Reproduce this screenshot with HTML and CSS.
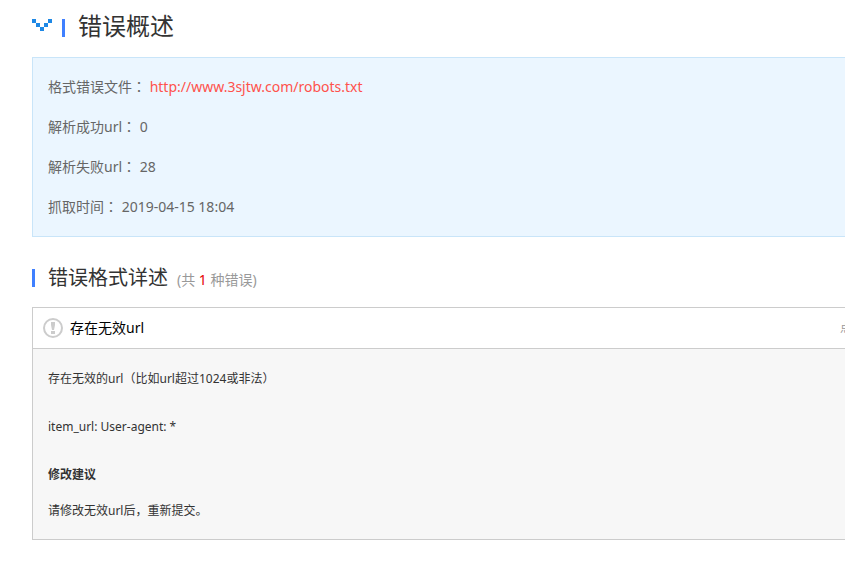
FILE: index.html
```html
<!DOCTYPE html>
<html lang="zh-CN">
<head>
<meta charset="utf-8">
<title>错误概述</title>
<link rel="stylesheet" href="styles.css">
</head>
<body>
<main class="page">
  <header class="page-head">
    <svg class="arrow" width="20" height="12" viewBox="0 0 20 12" shape-rendering="crispEdges" aria-hidden="true">
      <path fill="#1e88e5" d="M0 0h4v4H0zM4 4h4v4H4zM8 8h4v4H8zM12 4h4v4h-4zM16 0h4v4h-4z"/>
    </svg>
    <span class="bar"></span>
    <h1 class="page-title">错误概述</h1>
  </header>

  <dl class="summary">
    <div class="row"><dt>格式错误文件<span class="punct" lang="ja">：</span></dt> <dd><a class="file-link" href="#">http://www.3sjtw.com/robots.txt</a></dd></div>
    <div class="row"><dt>解析成功url<span class="punct" lang="ja">：</span></dt> <dd>0</dd></div>
    <div class="row"><dt>解析失败url<span class="punct" lang="ja">：</span></dt> <dd>28</dd></div>
    <div class="row"><dt>抓取时间<span class="punct" lang="ja">：</span></dt> <dd>2019-04-15 18:04</dd></div>
  </dl>

  <div class="section-head">
    <span class="bar"></span>
    <h2 class="section-title">错误格式详述</h2>
    <span class="count">(共 <em class="num">1</em> 种错误)</span>
  </div>

  <section class="card">
    <header class="card-head">
      <svg class="warn" width="20" height="20" viewBox="0 0 20 20" aria-hidden="true">
        <circle cx="10" cy="10" r="9" fill="none" stroke="#ccc" stroke-width="2"/>
        <path fill="#ccc" d="M8 4h4v3l-1 5H9L8 7zM8 13h4v3H8z"/>
      </svg>
      <h3 class="card-title">存在无效url</h3>
      <span class="more">点</span>
    </header>
    <div class="card-body">
      <p class="text">存在无效的url（比如url超过1024或非法）</p>
      <p class="text">item_url: User-agent: *</p>
      <h4 class="advice-title">修改建议</h4>
      <p class="advice">请修改无效url后，重新提交。</p>
    </div>
  </section>
</main>
</body>
</html>
```
FILE: styles.css
```css
* {
  box-sizing: border-box;
  margin: 0;
  padding: 0;
}

body {
  background: #fff;
  color: #333;
  font: 14px/20px "Noto Sans", "Noto Sans CJK SC", sans-serif;
  overflow-x: hidden;
}

h1, h2, h3, h4 {
  font-weight: 400;
}

.page {
  padding: 8px 0 32px 32px;
}

.page-head,
.section-head {
  display: flex;
  align-items: center;
}

.page-head {
  height: 40px;
}

.arrow {
  margin: 0 10px 6px 0;
}

.bar {
  width: 3px;
  height: 18px;
  margin-right: 13px;
  background: #3f80ff;
}

.page-title {
  padding-bottom: 4px;
  font-size: 24px;
  line-height: 32px;
}

.section-title {
  font-size: 20px;
  line-height: 32px;
}

.summary {
  margin-top: 9px;
  padding: 9px 15px;
  border: 1px solid #c9e5f9;
  border-right: 0;
  background: #ebf6ff;
  color: #666;
}

.row {
  height: 40px;
  line-height: 40px;
}

.row dt,
.row dd {
  display: inline;
}

.punct {
  font-family: "Noto Sans CJK JP", sans-serif;
  line-height: 1;
}

.file-link {
  color: #ff524c;
  text-decoration: none;
}

.section-head {
  margin-top: 25px;
  height: 32px;
}

.count {
  margin-left: 9px;
  padding-top: 4px;
  color: #999;
}

.num {
  color: #e60000;
  font-style: normal;
}

.card {
  margin-top: 13px;
  border: 1px solid #ccc;
  border-right: 0;
}

.card-head {
  display: flex;
  align-items: center;
  height: 41px;
  padding-left: 10px;
  border-bottom: 1px solid #ccc;
}

.card-title {
  margin-left: 7px;
  color: #000;
  font-size: 14px;
}

.more {
  margin-left: auto;
  margin-right: -7px;
  color: #999;
  font-size: 12px;
}

.card-body {
  padding: 18px 15px 16px;
  background: #f7f7f7;
  font-size: 12px;
  line-height: 24px;
}

.text {
  margin-bottom: 24px;
}

.advice-title {
  margin-bottom: 12px;
  font-size: 12px;
  font-weight: 700;
}
```
